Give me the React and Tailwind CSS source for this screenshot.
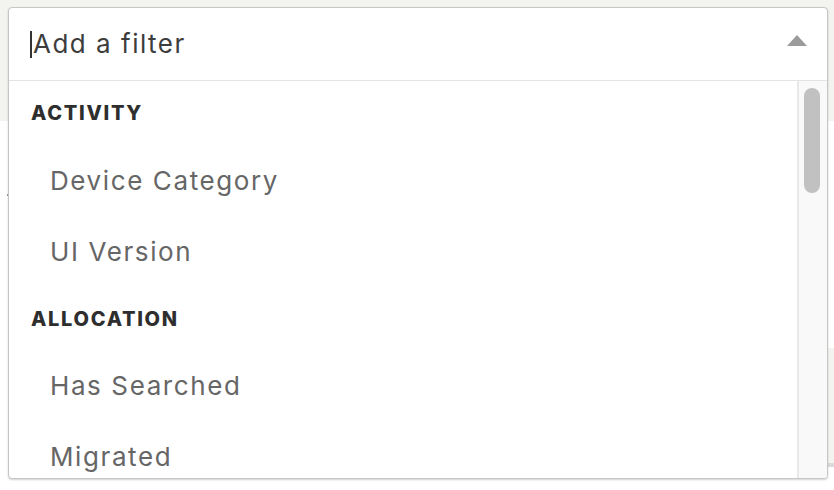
export default function App() {
  const groups = [
    { title: "ACTIVITY", items: ["Device Category", "UI Version"] },
    { title: "ALLOCATION", items: ["Has Searched", "Migrated"] },
  ];
  return (
    <div className="relative w-[834px] h-[490px] overflow-hidden bg-white font-['Inter',sans-serif]">
      <div className="h-[121px] bg-[#f3f3ef]" />
      <div className="absolute left-[828px] top-[348px] w-[6px] h-[119px] bg-[#f3f3ef] border-b-4 border-[#dadada]" />
      <div className="absolute left-[7px] top-[194px] w-[1px] h-[2px] bg-[#999]" />
      <div className="absolute left-[8px] top-[7px] w-[820px] h-[472px] flex flex-col rounded-[4px] border border-[#c6c6c6] bg-white shadow-[0_1px_2px_rgba(0,0,0,0.18)] overflow-hidden">
        <div className="h-[73px] shrink-0 flex items-center pl-[21px] pr-[20px] border-b border-[#e4e4e4]">
          <span className="w-[2px] h-[27px] bg-[#333] mr-[1px]" />
          <span className="flex-1 text-[26px] leading-[30px] tracking-[1.5px] text-[#3d3d3d]">Add a filter</span>
          <svg width="20" height="11" viewBox="0 0 20 11" className="mb-[7px]">
            <path d="M10 0 L20 11 L0 11 Z" fill="#9b9b9b" />
          </svg>
        </div>
        <div className="flex-1 flex min-h-0">
          <div className="flex-1 pt-[3px] overflow-hidden">
            {groups.map((g, i) => (
              <div key={g.title}>
                <div className={(i === 0 ? "pt-[18px] " : "pt-[19px] ") + "h-[63px] pl-[22px] text-[20px] leading-[22px] font-extrabold tracking-[1.7px] text-[#2e2e2e]"}>
                  {g.title}
                </div>
                {g.items.map((it) => (
                  <div key={it} className="h-[71px] flex items-center pl-[41px] pb-[3px] text-[26px] leading-[30px] tracking-[1.6px] text-[#666]">
                    {it}
                  </div>
                ))}
              </div>
            ))}
          </div>
          <div className="w-[30px] shrink-0 border-l-2 border-[#e8e8e8] bg-[#f9f9f9] pt-[7px] pl-[5px]">
            <div className="w-[16px] h-[105px] rounded-full bg-[#c1c1c1]" />
          </div>
        </div>
      </div>
    </div>
  );
}
